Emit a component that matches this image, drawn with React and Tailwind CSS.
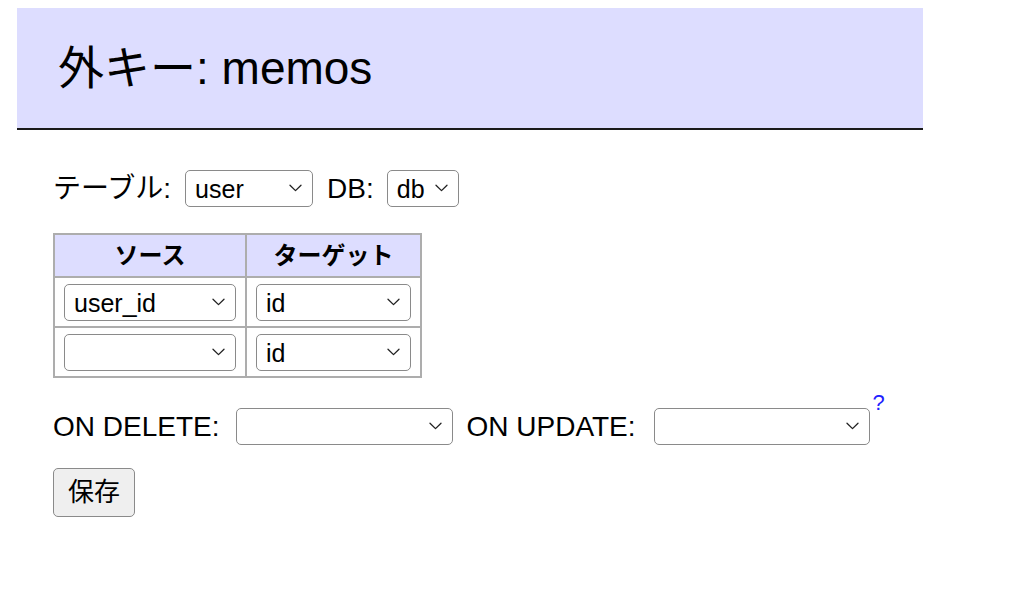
import React, { useState } from "react";

const FONT = "font-['Liberation_Sans','Noto_Sans_CJK_JP',sans-serif]";

function Chevron() {
  return (
    <svg
      width="13"
      height="8"
      viewBox="0 0 13 8"
      fill="none"
      stroke="#222"
      strokeWidth="1.3"
      strokeLinecap="round"
      strokeLinejoin="round"
    >
      <path d="M1 1.2 L6.5 6.6 L12 1.2" />
    </svg>
  );
}

// select styled like the browser default, chevron laid over the right edge
function Select({ value, options, width, onChange }) {
  return (
    <div className={`relative inline-flex h-[37px] ${width}`}>
      <select
        value={value}
        onChange={(e) => onChange(e.target.value)}
        className="h-full w-full appearance-none rounded-[5px] border border-[#8a8a8a] bg-white pl-[9px] pr-[30px] text-[25px] text-black outline-none"
      >
        {options.map((o) => (
          <option key={o} value={o}>
            {o}
          </option>
        ))}
      </select>
      <span className="pointer-events-none absolute right-[11px] top-[14px]">
        <Chevron />
      </span>
    </div>
  );
}

export default function App() {
  const [table, setTable] = useState("user");
  const [db, setDb] = useState("db");
  const [rows, setRows] = useState([
    { source: "user_id", target: "id" },
    { source: "", target: "id" },
  ]);
  const [onDelete, setOnDelete] = useState("");
  const [onUpdate, setOnUpdate] = useState("");

  const actions = ["", "RESTRICT", "NO ACTION", "CASCADE", "SET NULL", "SET DEFAULT"];

  const setRow = (idx, key, value) => {
    setRows((prev) => prev.map((r, i) => (i === idx ? { ...r, [key]: value } : r)));
  };

  return (
    <div className={`min-h-screen bg-white text-black ${FONT}`}>
      <div className="pt-[8px]">
        <h2 className="ml-[17px] flex h-[122px] w-[906px] items-center border-b-2 border-[#1a1a1a] bg-[#ddf] pl-[41px] text-[46px] font-normal">
          外キー: memos
        </h2>
      </div>

      <form className="pl-[53px] pt-[38px] text-[28px]" onSubmit={(e) => e.preventDefault()}>
        <div className="flex items-center">
          <span>テーブル:</span>
          <span className="ml-[14px]">
            <Select value={table} options={["user", "memos"]} width="w-[128px]" onChange={setTable} />
          </span>
          <span className="ml-[14px]">DB:</span>
          <span className="ml-[13px]">
            <Select value={db} options={["db"]} width="w-[72px]" onChange={setDb} />
          </span>
        </div>

        <table className="mt-[23px] table-fixed border-collapse border-2 border-[#adadad]">
          <thead>
            <tr className="h-[43px] bg-[#ddf]">
              <th className="w-[192px] border-2 border-[#adadad] text-[24px] font-bold">ソース</th>
              <th className="w-[175px] border-2 border-[#adadad] text-[24px] font-bold">ターゲット</th>
            </tr>
          </thead>
          <tbody>
            {rows.map((r, idx) => (
              <tr key={idx} className="h-[50px]">
                <td className="border-2 border-[#adadad] px-[9px]">
                  <div className="flex">
                    <Select
                      value={r.source}
                      options={["", "user_id", "id", "body"]}
                      width="w-full"
                      onChange={(v) => setRow(idx, "source", v)}
                    />
                  </div>
                </td>
                <td className="border-2 border-[#adadad] px-[9px]">
                  <div className="flex">
                    <Select
                      value={r.target}
                      options={["id", "name"]}
                      width="w-full"
                      onChange={(v) => setRow(idx, "target", v)}
                    />
                  </div>
                </td>
              </tr>
            ))}
          </tbody>
        </table>

        <div className="mt-[28px] flex items-center">
          <span>ON DELETE:</span>
          <span className="ml-[17px]">
            <Select value={onDelete} options={actions} width="w-[217px]" onChange={setOnDelete} />
          </span>
          <span className="ml-[13px]">ON UPDATE:</span>
          <span className="ml-[18px]">
            <Select value={onUpdate} options={actions} width="w-[216px]" onChange={setOnUpdate} />
          </span>
          <a href="#" className="ml-[3px] -mt-[14px] self-start text-[22px] leading-none text-[#1f1fff] no-underline">
            ?
          </a>
        </div>

        <button
          type="submit"
          className="mt-[20px] h-[49px] w-[82px] rounded-[5px] border border-[#8a8a8a] bg-[#efefef] text-[26px]"
        >
          保存
        </button>
      </form>
    </div>
  );
}
